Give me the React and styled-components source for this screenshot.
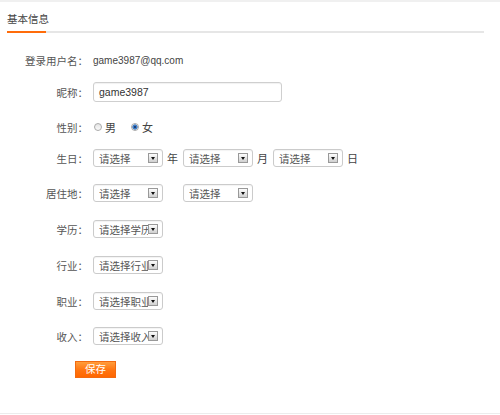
import React from "react";
import styled, { createGlobalStyle } from "styled-components";

const Global = createGlobalStyle`
  html, body { margin: 0; padding: 0; background: #fff; }
  body { font-family: "Liberation Sans", "Noto Sans CJK SC", sans-serif; }
`;

const Page = styled.div`
  width: 500px;
  height: 414px;
  box-sizing: border-box;
  border-top: 2px solid #f0f0f0;
  border-bottom: 1px solid #ececec;
  font-size: 10.5px;
  color: #333;
`;

const HeaderBar = styled.div`
  margin: 0 16px 0 7px;
  height: 29px;
  display: flex;
  align-items: flex-end;
  border-bottom: 2px solid #e6e6e6;
`;

const Tab = styled.div`
  width: 39px;
  height: 20px;
  line-height: 16px;
  font-size: 10.5px;
  color: #444;
  white-space: nowrap;
  border-bottom: 2px solid #ff6c0a;
  margin-bottom: -2px;
`;

const Form = styled.div`
  display: flex;
  flex-direction: column;
  padding-top: 17px;
`;

const Row = styled.div`
  display: grid;
  grid-template-columns: 88px 1fr;
  column-gap: 5px;
  align-items: center;
  height: 20px;
  margin-top: ${(p) => p.$mt || 0}px;
  &:first-child { margin-top: 0; }
`;

const Label = styled.div`
  text-align: right;
  color: #555;
  white-space: nowrap;
  font-size: 10.5px;
`;

const Value = styled.div`
  display: flex;
  align-items: center;
  font-size: 10px;
  color: #444;
`;

const TextInput = styled.div`
  width: 189px;
  height: 20px;
  box-sizing: border-box;
  border: 1px solid #cfcfcf;
  border-radius: 3px;
  box-shadow: inset 0 1px 1px rgba(0, 0, 0, 0.06);
  padding-left: 5px;
  display: flex;
  align-items: center;
  font-size: 10.5px;
  color: #333;
`;

const RadioItem = styled.label`
  display: flex;
  align-items: center;
  gap: 3px;
  margin-right: ${(p) => p.$mr || 0}px;
  font-size: 11px;
  color: #444;
`;

const RadioDot = styled.span`
  width: 8px;
  height: 8px;
  margin-left: 1px;
  border-radius: 50%;
  box-sizing: border-box;
  border: 1px solid #aaa;
  background: ${(p) =>
    p.$checked
      ? "radial-gradient(circle, #1e3f78 0 1.2px, #3f7fc8 1.5px 2.4px, #e6e6e6 2.8px)"
      : "linear-gradient(#e4e4e4, #fafafa)"};
`;

const SelectBox = styled.div`
  width: 70px;
  height: 18px;
  box-sizing: border-box;
  border: 1px solid #cbcbcb;
  border-radius: 3px;
  box-shadow: inset 0 1px 1px rgba(0, 0, 0, 0.05);
  padding-left: 5px;
  display: flex;
  align-items: center;
  font-size: 10.5px;
  color: #555;
  overflow: hidden;
`;

const SelectText = styled.span`
  flex: 1;
  min-width: 0;
  overflow: hidden;
  white-space: nowrap;
`;

const Arrow = styled.span`
  flex: none;
  width: 10px;
  height: 10px;
  margin-right: 4px;
  box-sizing: border-box;
  border: 1px solid #999;
  background: linear-gradient(#fdfdfd, #d0d0d0);
  display: flex;
  align-items: center;
  justify-content: center;
  &::after {
    content: "";
    border-left: 2.5px solid transparent;
    border-right: 2.5px solid transparent;
    border-top: 3px solid #111;
  }
`;

const Unit = styled.span`
  font-size: 11px;
  color: #444;
  margin: 0 5px 0 4px;
`;

const Spacer = styled.span`
  width: ${(p) => p.$w}px;
`;

const SaveButton = styled.button`
  margin: 15px 0 0 75px;
  width: 41px;
  height: 17px;
  padding: 0;
  border: 1px solid #f26a10;
  background: linear-gradient(#ff9d3b, #ff7410 55%, #ff6600);
  color: #fff;
  font-family: "Liberation Sans", "Noto Sans CJK SC", sans-serif;
  font-size: 10.5px;
  line-height: 15px;
  cursor: pointer;
`;

const Select = ({ text }) => (
  <SelectBox>
    <SelectText>{text}</SelectText>
    <Arrow />
  </SelectBox>
);

export default function App() {
  return (
    <>
      <Global />
      <Page>
        <HeaderBar>
          <Tab>基本信息</Tab>
        </HeaderBar>
        <Form>
          <Row>
            <Label>登录用户名：</Label>
            <Value>game3987@qq.com</Value>
          </Row>
          <Row $mt={12}>
            <Label>昵称：</Label>
            <Value>
              <TextInput>game3987</TextInput>
            </Value>
          </Row>
          <Row $mt={15}>
            <Label>性别：</Label>
            <Value>
              <RadioItem $mr={14}>
                <RadioDot />男
              </RadioItem>
              <RadioItem>
                <RadioDot $checked />女
              </RadioItem>
            </Value>
          </Row>
          <Row $mt={11}>
            <Label>生日：</Label>
            <Value>
              <Select text="请选择" />
              <Unit>年</Unit>
              <Select text="请选择" />
              <Unit>月</Unit>
              <Select text="请选择" />
              <Unit>日</Unit>
            </Value>
          </Row>
          <Row $mt={15}>
            <Label>居住地：</Label>
            <Value>
              <Select text="请选择" />
              <Spacer $w={20} />
              <Select text="请选择" />
            </Value>
          </Row>
          <Row $mt={16}>
            <Label>学历：</Label>
            <Value>
              <Select text="请选择学历" />
            </Value>
          </Row>
          <Row $mt={16}>
            <Label>行业：</Label>
            <Value>
              <Select text="请选择行业" />
            </Value>
          </Row>
          <Row $mt={16}>
            <Label>职业：</Label>
            <Value>
              <Select text="请选择职业" />
            </Value>
          </Row>
          <Row $mt={15}>
            <Label>收入：</Label>
            <Value>
              <Select text="请选择收入" />
            </Value>
          </Row>
          <div>
            <SaveButton>保存</SaveButton>
          </div>
        </Form>
      </Page>
    </>
  );
}
